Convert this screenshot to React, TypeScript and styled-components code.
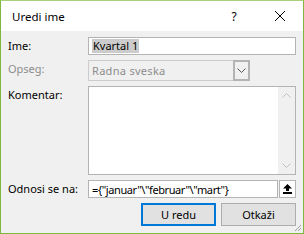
import React from "react";
import styled, { createGlobalStyle } from "styled-components";

const GlobalStyle = createGlobalStyle`
  html, body {
    margin: 0;
    padding: 0;
    background: #ffffff;
  }
  * {
    box-sizing: border-box;
  }
`;

const FONT = `"Noto Sans", "Open Sans", sans-serif`;

const S = {
  Window: styled.div`
    position: relative;
    width: 304px;
    height: 234px;
    border: 1px solid #7cb93c;
    border-top-color: #a9d17a;
    background: #f0f0f0;
    display: flex;
    flex-direction: column;
    font-family: ${FONT};
    font-size: 11px;
    color: #000;
  `,
  TitleBar: styled.div`
    height: 30px;
    background: #ffffff;
    display: flex;
    align-items: center;
    padding-left: 11px;
  `,
  Title: styled.span`
    flex: 1;
    font-size: 11.5px;
  `,
  TitleButton: styled.div`
    width: 46px;
    height: 30px;
    display: flex;
    align-items: center;
    justify-content: center;
    font-size: 12px;
  `,
  Body: styled.div`
    flex: 1;
    display: grid;
    grid-template-columns: 80px 208px;
    grid-template-rows: 18px 21px 89px 18px 23px;
    row-gap: 5px;
    padding: 6px 0 0 7px;
  `,
  Label: styled.label<{ $disabled?: boolean }>`
    line-height: 14px;
    padding-top: 2px;
    color: ${({ $disabled }) => ($disabled ? "#8d8d8d" : "#000")};
  `,
  TextBox: styled.div`
    background: #ffffff;
    border: 1px solid #b4b4b4;
    display: flex;
    align-items: center;
    padding-left: 3px;
    line-height: 14px;
  `,
  Selected: styled.span`
    background: #cccccc;
    padding: 0 1px;
  `,
  Combo: styled.div`
    width: 162px;
    background: #f0f0f0;
    border: 1px solid #cccccc;
    display: flex;
    align-items: stretch;
  `,
  ComboText: styled.span`
    flex: 1;
    display: flex;
    align-items: center;
    padding-left: 3px;
    color: #8d8d8d;
    letter-spacing: 0.3px;
  `,
  ComboButton: styled.div`
    width: 17px;
    border: 2px solid #b3b3b3;
    margin: -1px -1px -1px 0;
    background: #f0f0f0;
    display: flex;
    align-items: center;
    justify-content: center;
  `,
  TextArea: styled.div`
    background: #ffffff;
    border: 1px solid #b4b4b4;
    display: flex;
    justify-content: flex-end;
  `,
  ScrollBar: styled.div`
    width: 17px;
    background: #f0f0f0;
    display: flex;
    flex-direction: column;
    justify-content: space-between;
    align-items: center;
    padding: 6px 0;
  `,
  RefRow: styled.div`
    display: flex;
    gap: 1px;
  `,
  RefInput: styled.div`
    flex: 1;
    background: #ffffff;
    border: 1px solid #b4b4b4;
    display: flex;
    align-items: center;
    padding-left: 3px;
    white-space: nowrap;
    overflow: hidden;
    letter-spacing: -0.4px;
  `,
  RefButton: styled.div`
    width: 17px;
    background: #ffffff;
    border: 1px solid #b4b4b4;
    display: flex;
    align-items: center;
    justify-content: center;
  `,
  Buttons: styled.div`
    grid-column: 2;
    display: flex;
    justify-content: flex-end;
    gap: 5px;
  `,
  Button: styled.button<{ $default?: boolean }>`
    width: 75px;
    height: 23px;
    margin: 0;
    padding: 0;
    font-family: ${FONT};
    font-size: 11px;
    color: #000;
    background: #e1e1e1;
    border: ${({ $default }) =>
      $default ? "2px solid #0078d7" : "1px solid #adadad"};
  `,
  Grip: styled.svg`
    position: absolute;
    right: 1px;
    bottom: 1px;
  `,
};

const Chevron = ({ up, color }: { up?: boolean; color: string }) => (
  <svg width="9" height="5" viewBox="0 0 9 5">
    <path
      d={up ? "M0.5 4.5 L4.5 0.5 L8.5 4.5" : "M0.5 0.5 L4.5 4.5 L8.5 0.5"}
      fill="none"
      stroke={color}
      strokeWidth="1"
    />
  </svg>
);

const CollapseIcon = () => (
  <svg width="9" height="10" viewBox="0 0 9 10">
    <path d="M4.5 0 L9 4.5 L6 4.5 L6 7 L3 7 L3 4.5 L0 4.5 Z" fill="#000" />
    <rect x="0" y="8" width="9" height="2" fill="#000" />
  </svg>
);

const App = () => {
  return (
    <>
      <GlobalStyle />
      <S.Window>
        <S.TitleBar>
          <S.Title>Uredi ime</S.Title>
          <S.TitleButton>?</S.TitleButton>
          <S.TitleButton>
            <svg width="10" height="10" viewBox="0 0 10 10">
              <path d="M0 0 L10 10 M10 0 L0 10" stroke="#000" strokeWidth="1" />
            </svg>
          </S.TitleButton>
        </S.TitleBar>
        <S.Body>
          <S.Label>Ime:</S.Label>
          <S.TextBox>
            <S.Selected>Kvartal 1</S.Selected>
          </S.TextBox>

          <S.Label $disabled>Opseg:</S.Label>
          <S.Combo>
            <S.ComboText>Radna sveska</S.ComboText>
            <S.ComboButton>
              <Chevron color="#555" />
            </S.ComboButton>
          </S.Combo>

          <S.Label>Komentar:</S.Label>
          <S.TextArea>
            <S.ScrollBar>
              <Chevron up color="#bfbfbf" />
              <Chevron color="#bfbfbf" />
            </S.ScrollBar>
          </S.TextArea>

          <S.Label>Odnosi se na:</S.Label>
          <S.RefRow>
            <S.RefInput>={"{"}"januar"\"februar"\"mart"{"}"}</S.RefInput>
            <S.RefButton>
              <CollapseIcon />
            </S.RefButton>
          </S.RefRow>

          <S.Buttons>
            <S.Button $default>U redu</S.Button>
            <S.Button>Otkaži</S.Button>
          </S.Buttons>
        </S.Body>
        <S.Grip width="10" height="10" viewBox="0 0 10 10">
          <path d="M9 3 L3 9 M9 6 L6 9" stroke="#a0a0a0" strokeWidth="1" />
        </S.Grip>
      </S.Window>
    </>
  );
};

export default App;
